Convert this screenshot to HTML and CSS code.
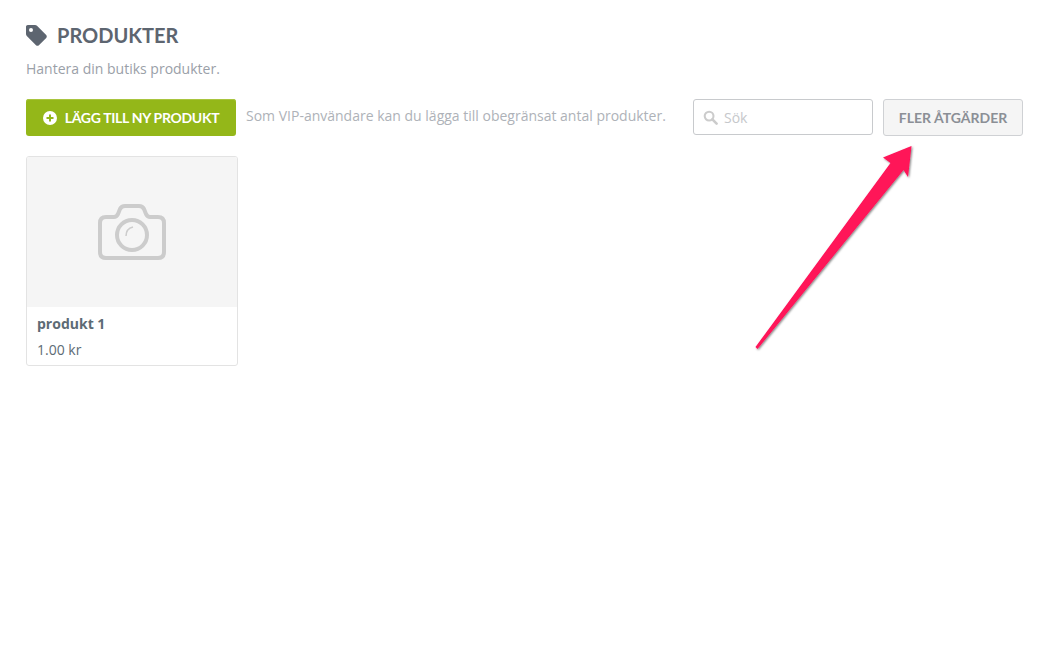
FILE: index.html
```html
<!DOCTYPE html>
<html lang="sv">
<head>
<meta charset="utf-8">
<title>Produkter</title>
<link rel="stylesheet" href="styles.css">
</head>
<body>
<main class="page">
  <header class="head">
    <h1 class="title">
      <svg class="tag" viewBox="0 0 21 21" width="21" height="21"><path fill-rule="evenodd" fill="#5d6570" d="M1.8 0H9c.8 0 1.500.3 2 .8l9.200 9.200c.8.8.8 2.100 0 2.900l-7.300 7.300c-.8.8-2.100.8-2.900 0L.8 11C.3 10.500 0 9.800 0 9V1.800C0 .8.800 0 1.800 0zM5 3a2 2 0 1 0 0 4 2 2 0 0 0 0-4z"/></svg>
      PRODUKTER
    </h1>
    <p class="sub">Hantera din butiks produkter.</p>
  </header>
  <div class="toolbar">
    <button class="add" type="button">
      <svg class="plus" viewBox="0 0 14 14" width="14" height="14"><circle cx="7" cy="7" r="7" fill="#fff"/><path d="M7 3.500v7M3.500 7h7" stroke="#94b719" stroke-width="2"/></svg>
      LÄGG TILL NY PRODUKT
    </button>
    <span class="vip">Som VIP-användare kan du lägga till obegränsat antal produkter.</span>
    <label class="search">
      <svg class="lens" viewBox="0 0 16 16" width="15" height="15"><circle cx="6.500" cy="6.500" r="4.700" fill="none" stroke="#ccc" stroke-width="2.200"/><path d="M10 10l4.500 4.500" stroke="#ccc" stroke-width="2.800" stroke-linecap="round"/></svg>
      <span class="ph">Sök</span>
    </label>
    <button class="more" type="button">FLER ÅTGÄRDER</button>
  </div>
  <article class="card">
    <div class="thumb">
      <svg viewBox="0 0 68 58" width="68" height="58"><g fill="none" stroke="#ccc" stroke-width="4"><path stroke-linejoin="round" d="M8 14h8c2 0 3-1 4-3l2-5c1-2 2-3 5-3h14c3 0 4 1 5 3l2 5c1 2 2 3 4 3h8c4 0 6 2 6 6v29c0 4-2 6-6 6H8c-4 0-6-2-6-6V20c0-4 2-6 6-6z"/><circle cx="34" cy="32" r="15"/></g><path d="M28 33c0-5 3-8 7-9" fill="none" stroke="#ccc" stroke-width="1.500"/></svg>
    </div>
    <div class="info">
      <div class="name">produkt 1</div>
      <div class="price">1.00 kr</div>
    </div>
  </article>
</main>
<svg class="arrow" viewBox="0 0 1050 672" width="1050" height="672"><defs><filter id="sh" x="-20%" y="-20%" width="140%" height="140%"><feDropShadow dx="1" dy="1" stdDeviation="1" flood-color="#000" flood-opacity=".5"/></filter></defs><path fill="#ff1258" filter="url(#sh)" d="M911.500 146L883 157.500L890.500 163L755.500 347L757.500 349L903.500 170L908 177Z"/></svg>
</body>
</html>
```
FILE: styles.css
```css
* { box-sizing: border-box; }
html, body { margin: 0; padding: 0; background: #fff; }
body { font-family: "Open Sans", sans-serif; color: #5d6570; }
.page { padding: 24px 27px 0 26px; }
.title {
  display: flex; align-items: center; gap: 10px; margin: 0;
  font: 700 20px/22px Lato, sans-serif; color: #5d6570;
}
.tag { display: block; }
.sub { margin: 13px 0 0; font-size: 14px; line-height: 19px; color: #9aa0a8; }
.toolbar { display: flex; align-items: flex-start; margin-top: 21px; }
.add {
  display: flex; align-items: center; justify-content: center; gap: 8px;
  width: 210px; height: 37px; padding: 0; border: 0; border-radius: 3px;
  background: #94b719; color: #fff; box-shadow: inset 0 1px 0 #a9c53f;
  font: 700 14px/1 Lato, sans-serif; letter-spacing: -.3px;
}
.vip { margin: 7px 0 0 10px; font-size: 14px; line-height: 19px; color: #aeb2b8; white-space: nowrap; flex: 1; }
.search {
  display: flex; align-items: center; gap: 6px;
  width: 180px; height: 36px; padding: 0 0 0 9px;
  border: 1px solid #c8cacd; border-radius: 3px; background: #fff;
}
.lens { display: block; }
.ph { font-size: 14px; color: #c6c8cb; }
.more {
  width: 140px; height: 37px; margin-left: 10px; padding: 0;
  border: 1px solid #cfd1d4; border-radius: 3px; background: #f5f5f5; color: #8b8f96;
  font: 700 14px/1 Lato, sans-serif;
}
.card {
  width: 212px; height: 210px; margin-top: 20px;
  border: 1px solid #e3e3e3; border-radius: 3px; overflow: hidden;
}
.thumb { height: 150px; background: #f5f5f5; display: flex; align-items: center; justify-content: center; }
.info { padding: 7px 10px 0; }
.name { font-size: 14px; font-weight: 700; line-height: 19px; color: #5d6b75; }
.price { margin-top: 7px; font-size: 14px; line-height: 19px; color: #5d6b75; }
.arrow { position: absolute; left: 0; top: 0; pointer-events: none; }
```
